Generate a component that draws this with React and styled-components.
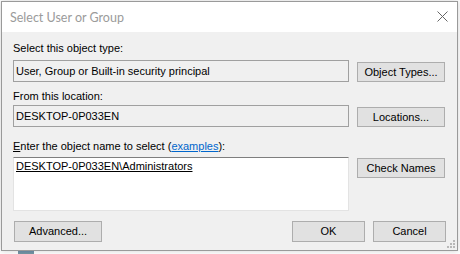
import React from "react";
import styled, { createGlobalStyle } from "styled-components";

const Global = createGlobalStyle`
  html, body {
    margin: 0;
    padding: 0;
    background: #fff;
    overflow: hidden;
  }
  #root {
    position: relative;
    width: 460px;
    height: 254px;
    overflow: hidden;
  }
`;

const Backdrop = styled.div`
  width: 460px;
  height: 254px;
  box-sizing: border-box;
  padding-top: 249px;
  font-family: "Liberation Sans", Arial, sans-serif;
  font-size: 11px;
  color: #000;
`;
const BackRow = styled.div`
  display: flex;
  align-items: center;
  height: 17px;
  padding-left: 18px;
`;
const BackCell = styled.span`
  width: ${(p) => p.$w}px;
  flex-shrink: 0;
  white-space: nowrap;
`;
const BackIcon = styled.span`
  width: 16px;
  height: 16px;
  margin-right: 9px;
  background: linear-gradient(#6c8fb3, #9bb46a);
  flex-shrink: 0;
`;

const Dialog = styled.div`
  position: absolute;
  left: 1px;
  top: 1px;
  width: 457px;
  height: 250px;
  box-sizing: border-box;
  border: 1px solid #9a9a9a;
  background: #f0f0f0;
  box-shadow: 0 0 6px rgba(0, 0, 0, 0.18);
  display: flex;
  flex-direction: column;
  font-family: "Liberation Sans", Arial, sans-serif;
  font-size: 11px;
  color: #000;
`;

const TitleBar = styled.div`
  height: 30px;
  flex-shrink: 0;
  background: #fff;
  display: flex;
  align-items: center;
  justify-content: space-between;
  padding: 0 9px 0 8px;
`;
const Title = styled.span`
  font-family: Lato, "Noto Sans", sans-serif;
  font-size: 12.5px;
  color: #9b9b9b;
`;
const Close = styled.svg`
  width: 11px;
  height: 11px;
  margin-top: -2px;
`;

const Body = styled.div`
  flex: 1;
  padding: 10px 11px 0 11px;
  display: flex;
  flex-direction: column;
`;

const Label = styled.div`
  line-height: 13px;
  height: 13px;
  margin-top: ${(p) => p.$top || 0}px;
  white-space: nowrap;
`;
const Key = styled.span`
  text-decoration: underline;
`;
const Link = styled.a`
  color: #0066cc;
  text-decoration: underline;
`;

const FieldRow = styled.div`
  display: grid;
  grid-template-columns: 336px 88px;
  column-gap: 8px;
  align-items: ${(p) => (p.$multi ? "start" : "end")};
  margin-top: ${(p) => p.$top}px;
`;

const Field = styled.div`
  box-sizing: border-box;
  height: 22px;
  border: 1px solid #a0a0a0;
  background: #f0f0f0;
  display: flex;
  align-items: center;
  padding-left: 2px;
  white-space: nowrap;
`;

const MultiField = styled.div`
  box-sizing: border-box;
  height: 54px;
  border: 1px solid #e3e3e3;
  border-top-color: #7e7e7e;
  background: #fff;
  padding: 2px 2px 0 2px;
  line-height: 13px;
`;
const Entry = styled.span`
  text-decoration: underline;
`;

const Button = styled.button`
  box-sizing: border-box;
  height: ${(p) => p.$h || 20}px;
  width: ${(p) => p.$w || 88}px;
  margin-top: ${(p) => p.$top || 0}px;
  padding: 0;
  border: 1px solid #adadad;
  background: #e1e1e1;
  font-family: "Liberation Sans", Arial, sans-serif;
  font-size: 11px;
  color: #000;
  line-height: 13px;
`;

const Footer = styled.div`
  display: flex;
  align-items: center;
  margin-top: 10px;
  padding-left: 1px;
  gap: 8px;
`;
const Spacer = styled.div`
  flex: 1;
`;

const Grip = styled.svg`
  position: absolute;
  right: 1px;
  bottom: 1px;
  width: 10px;
  height: 10px;
`;

function SizeGrip() {
  const dots = [
    [7, 1],
    [4, 4],
    [7, 4],
    [1, 7],
    [4, 7],
    [7, 7],
  ];
  return (
    <Grip viewBox="0 0 10 10">
      {dots.map(([x, y]) => (
        <rect key={`${x}-${y}`} x={x} y={y} width="2" height="2" fill="#b8b8b8" />
      ))}
    </Grip>
  );
}

export default function App() {
  return (
    <>
      <Global />
      <Backdrop>
        <BackRow>
          <BackIcon />
          <BackCell $w={52}>Allow</BackCell>
          <BackCell $w={177}>Users (DESKTOP-0P033EN\Users)</BackCell>
          <BackCell $w={145}>Read</BackCell>
          <BackCell $w={40}>None</BackCell>
        </BackRow>
      </Backdrop>
      <Dialog>
        <TitleBar>
          <Title>Select User or Group</Title>
          <Close viewBox="0 0 11 11">
            <path d="M0.5 0.5 L10.5 10.5 M10.5 0.5 L0.5 10.5" stroke="#666" strokeWidth="1" />
          </Close>
        </TitleBar>
        <Body>
          <Label>Select this object type:</Label>
          <FieldRow $top={5}>
            <Field>User, Group or Built-in security principal</Field>
            <Button>Object Types...</Button>
          </FieldRow>

          <Label $top={8}>From this location:</Label>
          <FieldRow $top={2}>
            <Field>DESKTOP-0P033EN</Field>
            <Button>Locations...</Button>
          </FieldRow>

          <Label $top={13}>
            <Key>E</Key>nter the object name to select (<Link>examples</Link>):
          </Label>
          <FieldRow $top={4} $multi>
            <MultiField>
              <Entry>DESKTOP-0P033EN\Administrators</Entry>
            </MultiField>
            <Button $top={1}>Check Names</Button>
          </FieldRow>

          <Footer>
            <Button $h={21}>Advanced...</Button>
            <Spacer />
            <Button $h={21} $w={73}>OK</Button>
            <Button $h={21} $w={73}>Cancel</Button>
          </Footer>
        </Body>
        <SizeGrip />
      </Dialog>
    </>
  );
}
